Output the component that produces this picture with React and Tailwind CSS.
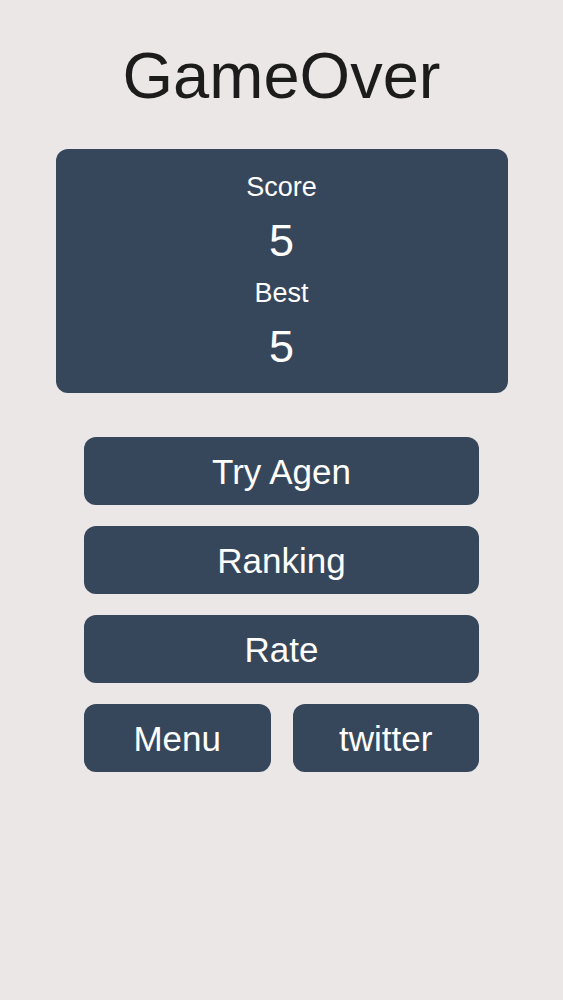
export default function App() {
  const font = { fontFamily: '"Liberation Sans", Arial, Helvetica, sans-serif' };
  const btn =
    "flex h-[68px] items-center justify-center rounded-[12px] bg-[#37475b] text-[35px] leading-none text-white";
  return (
    <div className="min-h-[1000px] w-full bg-[#ebe7e7]" style={font}>
      <div className="flex flex-col items-center pt-[43px]">
        <h1 className="text-[65px] leading-none text-[#1c1c1c]">GameOver</h1>
        <div className="mt-[41px] flex w-[452px] flex-col items-center rounded-[12px] bg-[#37475b] pb-[24px] pt-[25px] text-white">
          <div className="text-[27px] leading-none">Score</div>
          <div className="mt-[17px] text-[45px] leading-none">5</div>
          <div className="mt-[17px] text-[27px] leading-none">Best</div>
          <div className="mt-[17px] text-[45px] leading-none">5</div>
        </div>
        <div className="mt-[44px] flex w-[395px] flex-col gap-[21px]">
          <div className={btn}>Try Agen</div>
          <div className={btn}>Ranking</div>
          <div className={btn}>Rate</div>
          <div className="grid grid-cols-2 gap-[22px]">
            <div className={btn}>Menu</div>
            <div className={btn}>twitter</div>
          </div>
        </div>
      </div>
    </div>
  );
}
